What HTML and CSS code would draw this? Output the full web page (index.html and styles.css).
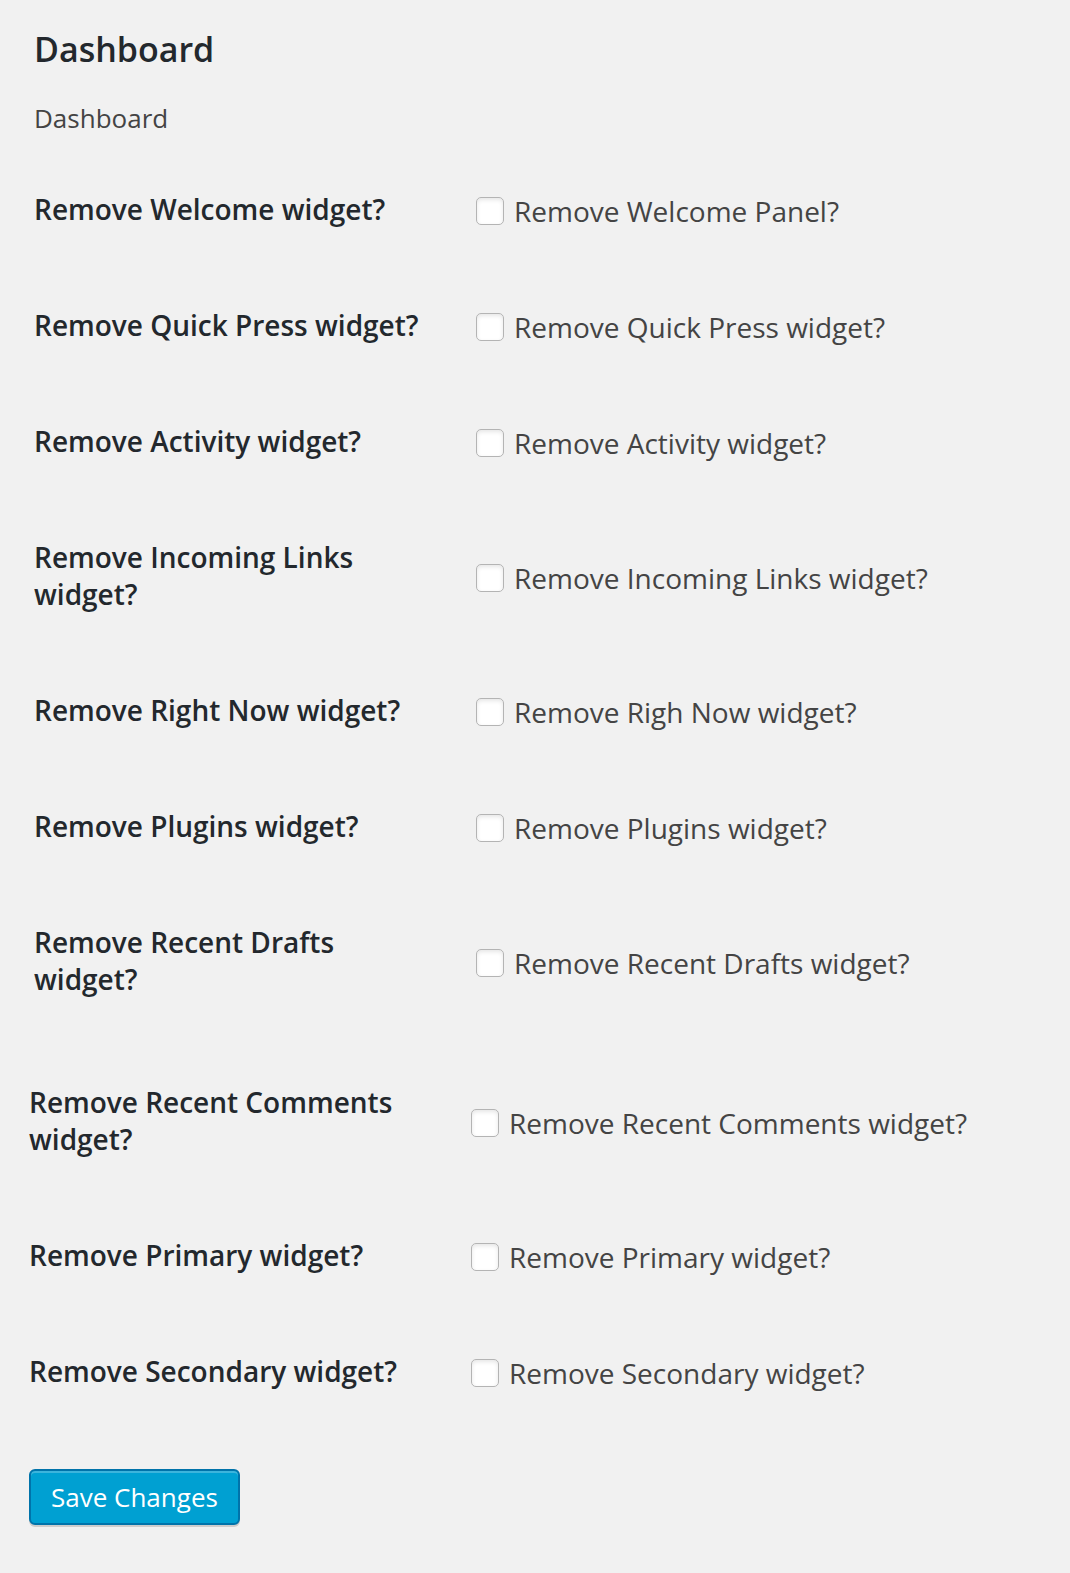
FILE: index.html
```html
<!DOCTYPE html>
<html lang="en">
<head>
<meta charset="utf-8">
<title>Dashboard</title>
<meta name="viewport" content="width=device-width, initial-scale=1">
<link rel="stylesheet" href="styles.css">
</head>
<body>
<form class="settings">
  <section class="group group-main">
    <h1 class="title">Dashboard</h1>
    <p class="intro">Dashboard</p>
    <div class="row"><div class="row-head">Remove Welcome widget?</div><label class="option"><input class="check" type="checkbox">Remove Welcome Panel?</label></div>
    <div class="row"><div class="row-head">Remove Quick Press widget?</div><label class="option"><input class="check" type="checkbox">Remove Quick Press widget?</label></div>
    <div class="row"><div class="row-head">Remove Activity widget?</div><label class="option"><input class="check" type="checkbox">Remove Activity widget?</label></div>
    <div class="row"><div class="row-head">Remove Incoming Links widget?</div><label class="option"><input class="check" type="checkbox">Remove Incoming Links widget?</label></div>
    <div class="row"><div class="row-head">Remove Right Now widget?</div><label class="option"><input class="check" type="checkbox">Remove Righ Now widget?</label></div>
    <div class="row"><div class="row-head">Remove Plugins widget?</div><label class="option"><input class="check" type="checkbox">Remove Plugins widget?</label></div>
    <div class="row"><div class="row-head">Remove Recent Drafts widget?</div><label class="option"><input class="check" type="checkbox">Remove Recent Drafts widget?</label></div>
  </section>
  <section class="group group-more">
    <div class="row"><div class="row-head">Remove Recent Comments widget?</div><label class="option"><input class="check" type="checkbox">Remove Recent Comments widget?</label></div>
    <div class="row"><div class="row-head">Remove Primary widget?</div><label class="option"><input class="check" type="checkbox">Remove Primary widget?</label></div>
    <div class="row"><div class="row-head">Remove Secondary widget?</div><label class="option"><input class="check" type="checkbox">Remove Secondary widget?</label></div>
    <button class="save" type="submit">Save Changes</button>
  </section>
</form>
</body>
</html>
```

FILE: styles.css
```css
* { box-sizing: border-box; }

body {
  margin: 0;
  background: #f1f1f1;
  color: #444;
  font-family: "Open Sans", sans-serif;
  font-size: 28px;
  line-height: 37px;
}

.settings { padding: 25px 0 46px; }

.group-main { padding-left: 34px; }

.group-more { padding: 7px 0 0 29px; }

.title {
  margin: 0;
  color: #23282d;
  font-size: 34px;
  font-weight: 600;
  line-height: 48px;
}

.intro {
  margin: 27px 0 55px;
  font-size: 26px;
  line-height: 36px;
}

.row {
  display: grid;
  grid-template-columns: 400px 1fr;
  column-gap: 42px;
  align-items: center;
  margin-bottom: 79px;
}

.row-head {
  color: #23282d;
  font-weight: 600;
}

.option {
  display: flex;
  align-items: center;
  gap: 10px;
  padding-top: 3px;
  line-height: 34px;
}

.check {
  appearance: none;
  flex: none;
  width: 28px;
  height: 28px;
  margin: 0;
  border: 1px solid #b4b4b4;
  border-radius: 5px;
  background: #fff;
  box-shadow: inset 0 2px 4px rgba(0, 0, 0, 0.1);
}

.check:checked { background: #1e8cbe; }

.save {
  display: block;
  height: 56px;
  padding: 0 20px;
  border: 2px solid #0073aa;
  border-radius: 6px;
  background: #00a0d2;
  box-shadow: inset 0 2px 0 rgba(120, 200, 230, 0.5), 0 2px 0 rgba(0, 0, 0, 0.15);
  color: #fff;
  font: inherit;
  font-size: 26px;
}
```
